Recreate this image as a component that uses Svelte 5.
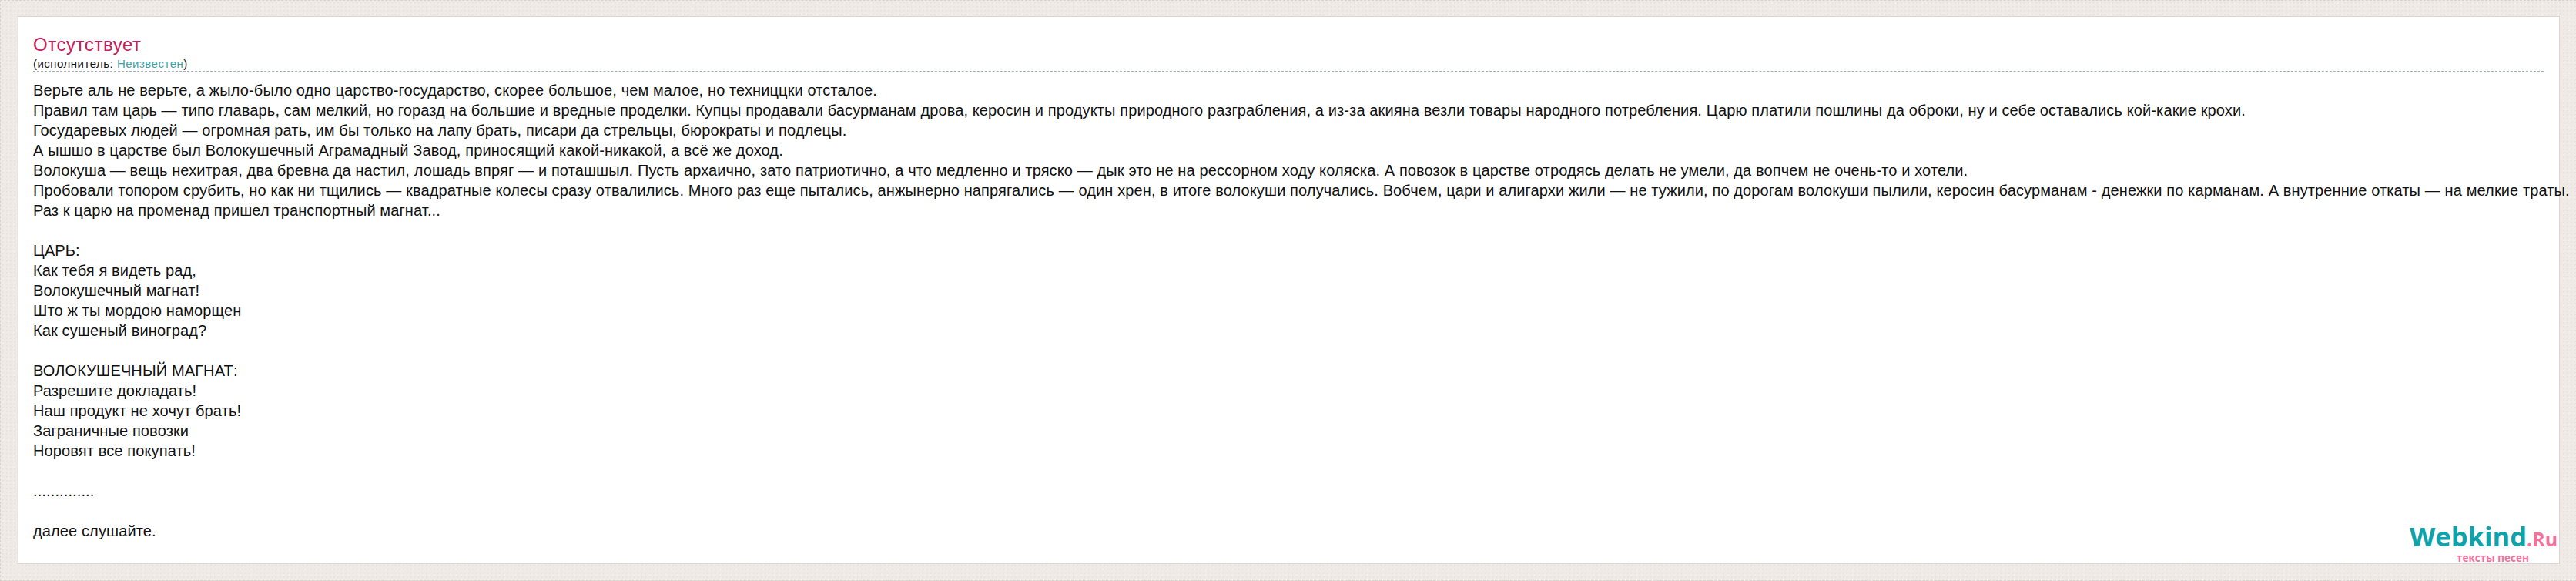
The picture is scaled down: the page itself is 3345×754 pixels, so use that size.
<script>
	const intro = [
		'Верьте аль не верьте, а жыло-было одно царство-государство, скорее большое, чем малое, но техниццки отсталое.',
		'Правил там царь — типо главарь, сам мелкий, но горазд на большие и вредные проделки. Купцы продавали басурманам дрова, керосин и продукты природного разграбления, а из-за акияна везли товары народного потребления. Царю платили пошлины да оброки, ну и себе оставались кой-какие крохи.',
		'Государевых людей — огромная рать, им бы только на лапу брать, писари да стрельцы, бюрократы и подлецы.',
		'А ышшо в царстве был Волокушечный Аграмадный Завод, приносящий какой-никакой, а всё же доход.',
		'Волокуша — вещь нехитрая, два бревна да настил, лошадь впряг — и поташшыл. Пусть архаично, зато патриотично, а что медленно и тряско — дык это не на рессорном ходу коляска. А повозок в царстве отродясь делать не умели, да вопчем не очень-то и хотели.',
		'Пробовали топором срубить, но как ни тщились — квадратные колесы сразу отвалились. Много раз еще пытались, анжынерно напрягались — один хрен, в итоге волокуши получались. Вобчем, цари и алигархи жили — не тужили, по дорогам волокуши пылили, керосин басурманам - денежки по карманам. А внутренние откаты — на мелкие траты.',
		'Раз к царю на променад пришел транспортный магнат...'
	];
	const stanzas = [
		['ЦАРЬ:', 'Как тебя я видеть рад,', 'Волокушечный магнат!', 'Што ж ты мордою наморщен', 'Как сушеный виноград?'],
		['ВОЛОКУШЕЧНЫЙ МАГНАТ:', 'Разрешите докладать!', 'Наш продукт не хочут брать!', 'Заграничные повозки', 'Норовят все покупать!'],
		['..............'],
		['далее слушайте.']
	];
</script>

<div class="page">
	<main class="card">
		<header class="head">
			<h1>Отсутствует</h1>
			<p class="artist">(исполнитель: <a href="#artist">Неизвестен</a>)</p>
		</header>
		<div class="lyrics">
			<div class="block">
				{#each intro as line}
					<div>{line}</div>
				{/each}
			</div>
			{#each stanzas as stanza}
				<div class="block">
					{#each stanza as line}
						<div>{line}</div>
					{/each}
				</div>
			{/each}
		</div>
		<div class="logo">
			<div class="brand"><span class="word">Webkind</span><span class="ru">.Ru</span></div>
			<div class="sub">тексты песен</div>
		</div>
	</main>
</div>

<style>
	:global(body) {
		margin: 0;
		background: #efeae6;
	}

	.page {
		height: 754px;
		box-sizing: border-box;
		padding: 20px 21px 20px 21px;
		overflow: hidden;
		background-color: #efeae6;
		background-image:
			radial-gradient(#e8e2dd 1px, transparent 1px),
			radial-gradient(#f4f0ed 1px, transparent 1px);
		background-size: 5px 5px, 7px 7px;
		border-top: 1px dashed #d8d2cd;
		border-left: 1px dashed #d8d2cd;
		border-bottom: 1px dashed #d8d2cd;
	}

	.card {
		position: relative;
		height: 711px;
		box-sizing: border-box;
		padding: 21px 20px 0;
		background: #fff;
		border: 1px solid #dcd5d0;
		border-left-color: #ebe6e2;
		font-family: 'Liberation Sans', Arial, sans-serif;
		color: #111;
	}

	.head {
		border-bottom: 1px dashed #9fb2c0;
	}

	h1 {
		margin: 0 0 2px;
		font-size: 24px;
		line-height: 29px;
		font-weight: normal;
		letter-spacing: 0.55px;
		color: #c2205a;
	}

	.artist {
		margin: 0;
		font-size: 15px;
		line-height: 18px;
		letter-spacing: 0.5px;
	}

	.artist a {
		color: #3fa3a8;
		text-decoration: none;
	}

	.lyrics {
		margin-top: 11px;
		font-size: 20px;
		line-height: 26px;
		letter-spacing: 0.12px;
		white-space: nowrap;
	}

	.block {
		margin-bottom: 26px;
	}

	.logo {
		position: absolute;
		right: 6px;
		bottom: 1px;
		width: 188px;
		font-family: 'Open Sans', sans-serif;
		font-weight: 700;
		white-space: nowrap;
	}

	.brand {
		line-height: 32px;
	}

	.word {
		font-size: 34.5px;
		color: #0ea3ab;
	}

	.ru {
		font-size: 25px;
		color: #f7709c;
	}

	.sub {
		margin-left: 61px;
		font-size: 13.5px;
		line-height: 11px;
		color: #f7709c;
	}
</style>
